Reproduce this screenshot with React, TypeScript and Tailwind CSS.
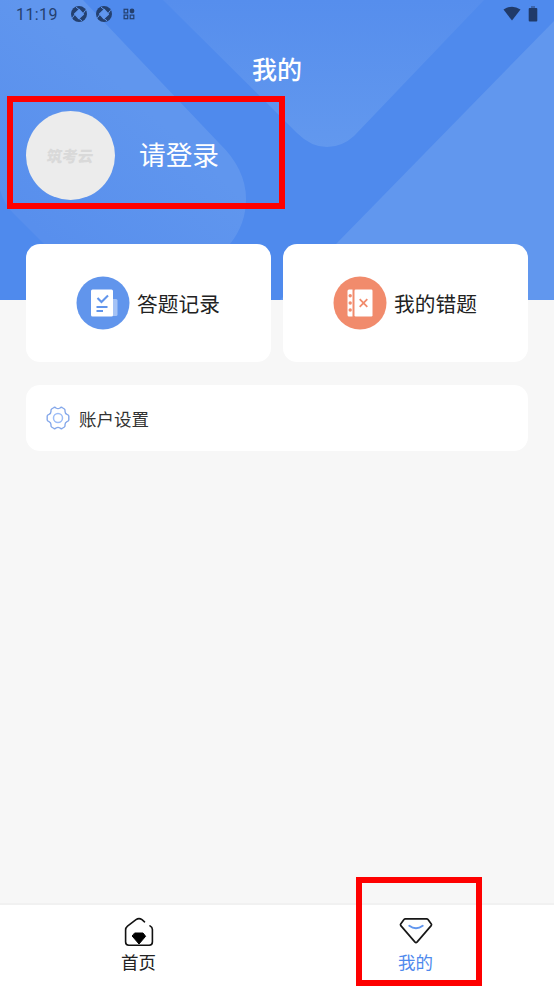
import { useState } from 'react';
import type { ReactNode } from 'react';

function ShutterIcon() {
    return (
        <svg viewBox="0 0 16 16" className="h-4 w-4 shrink-0">
            <circle cx="8" cy="8" r="8" fill="#24406f" />
            <path d="M8.3 3.6 12.4 8.2 7.8 12.5 3.6 7.9z" fill="#6096ee" stroke="#6096ee" strokeWidth="1.4" strokeLinejoin="round" />
            <path d="M8.8 4 5 1.2M12 7.6 14.6 4.2M7.4 12 11 14.8M4 8.3 1.4 11.8" stroke="#6096ee" strokeWidth="1" />
        </svg>
    );
}

function WidgetsIcon() {
    return (
        <svg viewBox="0 0 12 12" className="h-3 w-3 shrink-0" fill="none" stroke="#24406f" strokeWidth="1.2">
            <rect x="1.1" y="1.3" width="3.6" height="3.6" />
            <rect x="1.1" y="7.1" width="3.6" height="3.6" />
            <rect x="7.2" y="7.1" width="3.6" height="3.6" />
            <circle cx="9" cy="3" r="2.4" fill="#24406f" stroke="none" />
        </svg>
    );
}

function StatusBar() {
    return (
        <div className="flex h-7 items-center pl-4 pr-4 text-[#24406f]">
            <span className="w-[55px] pt-px font-[Roboto,sans-serif] text-base leading-none tracking-[0.4px]">11:19</span>
            <div className="flex items-center">
                <ShutterIcon />
                <span className="w-[9px]" />
                <ShutterIcon />
                <span className="w-[11px]" />
                <WidgetsIcon />
            </div>
            <div className="ml-auto flex items-center gap-[7px]">
                <svg viewBox="0 0 18 15" className="-mt-0.5 h-[15px] w-[18px]" fill="#203a69">
                    <path d="M.5 3.5Q9-2.2 17.5 3.5L9 14.6z" />
                </svg>
                <svg viewBox="0 0 10 16" className="-mt-px h-4 w-[10px]">
                    <path d="M3 0h4v2H3z" fill="#3c65ad" />
                    <rect x=".7" y="2" width="8.6" height="13.5" rx="1" fill="#203a69" />
                </svg>
            </div>
        </div>
    );
}

function HeaderPattern() {
    return (
        <svg viewBox="0 0 554 300" className="absolute inset-0 h-full w-full" preserveAspectRatio="none">
            <defs>
                <linearGradient id="band" gradientUnits="userSpaceOnUse" x1="60" y1="250" x2="170" y2="130">
                    <stop offset="0" stopColor="#588fed" />
                    <stop offset="1" stopColor="#6096ee" />
                </linearGradient>
                <linearGradient id="wedge" x1="0" y1="0" x2="0" y2="1">
                    <stop offset="0" stopColor="#568eed" />
                    <stop offset="1" stopColor="#6298ee" />
                </linearGradient>
            </defs>
            <path d="M0 0H83L219 143Q246 169 246 199Q246 224 230 244L190 290H90L44 244 14 214Q4 204 0 190z" fill="url(#band)" />
            <path d="M163 0 297 133Q311 147 327 147Q342 147 354 136L484 0z" fill="url(#wedge)" />
            <path d="M554 21 336 244 280 300H554z" fill="#6197ee" />
        </svg>
    );
}

function RecordIcon() {
    return (
        <svg viewBox="0 0 54 54" className="h-[54px] w-[54px]">
            <circle cx="27" cy="27" r="26.5" fill="#6195ec" />
            <rect x="30" y="23" width="11.5" height="17" rx="1.5" fill="#a5c3f6" />
            <rect x="15" y="13.5" width="22" height="27" rx="1.5" fill="#fff" />
            <path d="m21.5 22 4 4 6.5-6.5" fill="none" stroke="#6195ec" strokeWidth="2.1" />
            <path d="M20.5 31h11M20.5 35h6.5" stroke="#6195ec" strokeWidth="1.9" />
        </svg>
    );
}

function MistakeIcon() {
    return (
        <svg viewBox="0 0 54 54" className="h-[54px] w-[54px]">
            <circle cx="27" cy="27" r="26.5" fill="#f18b6c" />
            <path d="M16 13.5h3.5v27H16q-1.5 0-1.5-1.5V15q0-1.5 1.5-1.5z" fill="#fff" />
            <rect x="21.5" y="13.5" width="18" height="27" rx="1.2" fill="#fff" />
            <g fill="#f18b6c">
                <circle cx="17.2" cy="19.7" r="1.7" />
                <circle cx="17.2" cy="27" r="1.7" />
                <circle cx="17.2" cy="34" r="1.7" />
            </g>
            <path d="m26.7 23.2 7.6 7.6m0-7.6-7.6 7.6" stroke="#f18b6c" strokeWidth="1.8" />
        </svg>
    );
}

function SettingsIcon() {
    return (
        <svg viewBox="0 0 24 24" className="h-6 w-6" fill="none" stroke="#85a8ea" strokeWidth="1.4" strokeLinejoin="round">
            <path d="M8 1.5Q9 1 10 2Q12 3.3 14 2Q15 1 16 1.5L18.4 3Q19.3 3.8 19 5.2Q19 7.5 21 8.4Q22.8 9 22.8 10V14Q22.8 15 21 15.6Q19 16.5 19 18.8Q19.3 20.2 18.4 21L16 22.5Q15 23 14 22Q12 20.7 10 22Q9 23 8 22.5L5.6 21Q4.7 20.2 5 18.8Q5 16.5 3 15.6Q1.2 15 1.2 14V10Q1.2 9 3 8.4Q5 7.5 5 5.2Q4.7 3.8 5.6 3z" />
            <circle cx="12" cy="12" r="4.5" stroke="#9dbdf7" strokeWidth="1.5" />
        </svg>
    );
}

function HomeIcon() {
    return (
        <svg viewBox="0 0 30 30" className="h-[30px] w-[30px]" fill="none" stroke="#111" strokeWidth="1.6" strokeLinecap="round">
            <path d="M20.5 4.8 18 2.7Q15 .5 12 2.7L3.5 9.1Q1.6 10.6 1.6 13V25Q1.6 28.2 4.8 28.2H25.2Q28.4 28.2 28.4 25V12.5Q28.4 10.2 26 8.9" />
            <path d="M11 16H19L21.6 19.3 15 27 8.4 19.3z" fill="#000" stroke="#000" strokeWidth="1" strokeLinejoin="round" />
        </svg>
    );
}

function MineIcon() {
    return (
        <svg viewBox="0 0 34 28" className="h-7 w-[34px]" fill="none" strokeLinecap="round" strokeLinejoin="round">
            <path d="M6.5 1.8H27.5Q28.5 1.8 29 2.5L32.3 7Q32.9 7.8 32.2 8.6L18.2 24.9Q17 26.2 15.8 24.9L1.8 8.6Q1.1 7.8 1.7 7L5 2.5Q5.5 1.8 6.5 1.8z" stroke="#171717" strokeWidth="1.7" />
            <path d="M10.3 8.8Q17 13.7 23.7 8.8" stroke="#6196ee" strokeWidth="2" />
        </svg>
    );
}

interface ShortcutProps {
    icon: ReactNode;
    label: string;
}

function Shortcut({ icon, label }: ShortcutProps) {
    return (
        <button className="flex h-[118px] items-center justify-center gap-[7px] rounded-[14px] bg-white pr-px text-[20.7px] text-[#222]">
            {icon}
            <span className="pt-px">{label}</span>
        </button>
    );
}

const tabs = [
    { id: 'home', label: '首页', icon: <HomeIcon /> },
    { id: 'mine', label: '我的', icon: <MineIcon /> },
];

export default function App() {
    const [activeTab, setActiveTab] = useState('mine');

    return (
        <div className="relative flex h-[986px] w-[554px] flex-col overflow-hidden bg-[#f7f7f7] font-['Noto_Sans_CJK_SC',sans-serif]">
            <header className="relative h-[300px] shrink-0 bg-[#4f8aed]">
                <HeaderPattern />
                <div className="relative">
                    <StatusBar />
                    <h1 className="mt-[21px] text-center text-[25px] font-medium leading-[38px] text-white">我的</h1>
                    <div className="mt-6 flex items-center gap-6 pl-[26px]">
                        <div className="flex h-[89px] w-[89px] items-center justify-center rounded-full bg-[#ececec]">
                            <span className="-skew-x-6 text-[15.5px] font-black text-[#d9d9d9]">筑考云</span>
                        </div>
                        <span className="pb-[3px] text-[26.7px] leading-none text-white">请登录</span>
                    </div>
                </div>
            </header>

            <main className="relative -mt-14 flex-1 px-[26px]">
                <div className="grid grid-cols-2 gap-3">
                    <Shortcut icon={<RecordIcon />} label="答题记录" />
                    <Shortcut icon={<MistakeIcon />} label="我的错题" />
                </div>
                <button className="mt-[23px] flex h-[66px] w-full items-center gap-[9px] rounded-[14px] bg-white pl-5 text-[17.5px] text-[#333]">
                    <SettingsIcon />
                    <span className="pt-0.5">账户设置</span>
                </button>
            </main>

            <nav className="grid h-[83px] shrink-0 grid-cols-2 border-t-2 border-[#f1f1f1] bg-white">
                {tabs.map(tab => (
                    <button
                        key={tab.id}
                        onClick={() => setActiveTab(tab.id)}
                        className={`flex flex-col items-center pt-3 text-[17.5px] leading-[26px] ${activeTab === tab.id ? 'text-[#4f8aed]' : 'text-[#222]'}`}
                    >
                        <span className="flex h-8 items-start">{tab.icon}</span>
                        <span>{tab.label}</span>
                    </button>
                ))}
            </nav>

            {/* Highlight frames around the login entry and the active tab */}
            <div className="pointer-events-none absolute left-[6.5px] top-24 h-[112.5px] w-[278px] border-6 border-[#fe0000]" />
            <div className="pointer-events-none absolute left-[355.5px] top-[877px] h-[108.5px] w-[126px] border-6 border-[#fe0000]" />
        </div>
    );
}
